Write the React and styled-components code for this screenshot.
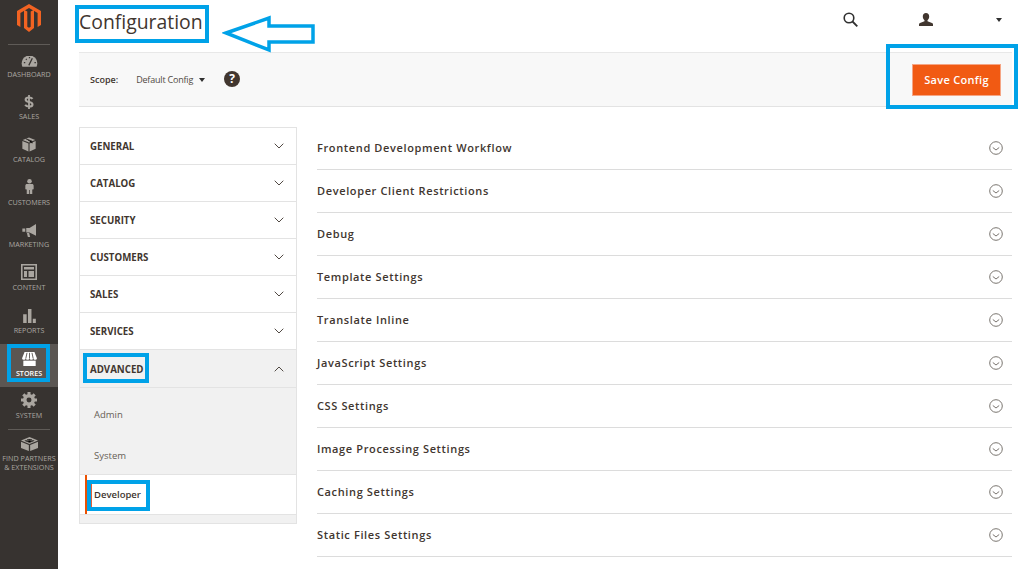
import React from 'react'
import styled, { createGlobalStyle } from 'styled-components'

const GlobalStyle = createGlobalStyle`
  html, body { margin: 0; padding: 0; background: #fff; overflow: hidden; }
  body { font-family: "Open Sans", "Liberation Sans", sans-serif; color: #303030; }
`

const LogoIcon = () => (
  <svg width="24" height="28" viewBox="0 0 24 28">
    <path fill="#f26322" d="M12 0 24 7v14l-3.4 2V9L12 4 3.4 9v14L0 21V7z" />
    <path fill="#f26322" d="M10.3 7.6v15.1L12 23.7l1.7-1V7.6l3.3-1.9v18.2L12 28l-5-4.100V5.700z" />
  </svg>
)

const icons = {
  dashboard: (
    <svg width="17" height="11" viewBox="0 2 24 15">
      <path fill="#aaa6a0" d="M12 1C5.500 1 1 6 1 12c0 2 .4 3.500 1 5h20c.6-1.500 1-3 1-5 0-6-4.500-11-11-11z" />
      <path stroke="#373330" strokeWidth="1.800" d="M11 15 16 5M4 11h2M7 6l1 1M12 3v2M19 11h2" />
    </svg>
  ),
  sales: (
    <svg width="10" height="14" viewBox="0 0 14 20">
      <path fill="none" stroke="#aaa6a0" strokeWidth="3" d="M12 5.500C11 4 9.500 3.500 7 3.500c-3 0-4.800 1.200-4.800 3.200 0 2 2 2.700 4.800 3.300 3 .6 5 1.300 5 3.400 0 2-2 3.100-5 3.100-2.500 0-4.200-.8-5.500-2.400" />
      <path stroke="#aaa6a0" strokeWidth="2.600" d="M7 0v20" />
    </svg>
  ),
  catalog: (
    <svg width="14" height="15" viewBox="0 0 20 20">
      <path fill="#aaa6a0" d="M10 0 19 3.500 10 7 1 3.500z" />
      <path fill="#aaa6a0" d="M.5 5 9.200 8.500V20L.5 16zM19.500 5 10.800 8.500V20l8.700-4z" />
      <path stroke="#373330" strokeWidth="1.400" d="M5.500 1.800 14.500 5.300v3" />
    </svg>
  ),
  customers: (
    <svg width="9" height="17" viewBox="0 0 13 22">
      <circle cx="6.500" cy="3.500" r="3.300" fill="#aaa6a0" />
      <path fill="#aaa6a0" d="M3 7.500h7c1.500 0 2.500 1 2.500 2.500v5l-2 .5V22H7v-6H6v6H2.500v-6.500L.5 15v-5C.5 8.500 1.500 7.500 3 7.500z" />
    </svg>
  ),
  marketing: (
    <svg width="15" height="13" viewBox="0 0 22 20">
      <path fill="#aaa6a0" d="M21 0v18L11 13H6V6h5z" />
      <path fill="#aaa6a0" d="M0 7h4.500v5H0zM7 14h3.500l1.500 6H8.500z" />
    </svg>
  ),
  content: (
    <svg width="16" height="16" viewBox="0 0 16 16">
      <path fill="none" stroke="#aaa6a0" strokeWidth="1.600" d="M.8.8h14.400v14.400H.8z" />
      <path fill="#aaa6a0" d="M3 3h10v2.500H3zM3 7h3v6H3zM7.500 7H13v6H7.500z" />
    </svg>
  ),
  reports: (
    <svg width="13" height="14" viewBox="0 0 14.500 16">
      <path fill="#aaa6a0" d="M0 6h4v10H0zM5.500 0h4v16h-4zM11 11h3.500v5H11z" />
    </svg>
  ),
  stores: (
    <svg width="17" height="14" viewBox="0 0 18 17">
      <path fill="#fff" d="M3 0h12l3 7.500c0 1.300-1 2-2.200 2-1 0-1.900-.6-2.200-1.500-.3.900-1.200 1.500-2.300 1.500S9.300 8.900 9 8c-.3.900-1.200 1.500-2.300 1.500S4.700 8.900 4.400 8c-.3.900-1.200 1.500-2.200 1.500C1 9.500 0 8.800 0 7.500z" />
      <path stroke="#5b5652" strokeWidth="1.100" d="M6 1 4.500 8M9 1v7M12 1l1.500 7" />
      <path fill="#fff" d="M1.500 10.500h15V17h-15z" />
    </svg>
  ),
  system: (
    <svg width="16" height="16" viewBox="0 0 18 18">
      <circle cx="9" cy="9" r="4.900" fill="none" stroke="#aaa6a0" strokeWidth="3.800" />
      <path stroke="#aaa6a0" strokeWidth="3.400" d="M9 0v18M0 9h18M2.600 2.600l12.800 12.800M15.400 2.600 2.600 15.400" />
      <circle cx="9" cy="9" r="2.800" fill="#373330" />
    </svg>
  ),
  partners: (
    <svg width="17" height="14" viewBox="0 0 18 18" preserveAspectRatio="none">
      <path fill="#aaa6a0" d="M9 0 18 4.500 9 9 0 4.500z" />
      <path fill="#aaa6a0" d="M0 6 8.300 10.200V18L0 14zM18 6 9.700 10.200V18L18 14z" />
      <path stroke="#373330" strokeWidth="1" d="M4 4.500 9 7l5-2.500M6.500 3 9 4.300 11.500 3" />
    </svg>
  ),
}

const Page = styled.div`
  width: 1024px;
  height: 569px;
  position: relative;
  display: flex;
  overflow: hidden;
  background: #fff;
`

const Sidebar = styled.nav`
  width: 58px;
  flex: none;
  background: #373330;
  display: flex;
  flex-direction: column;
  align-items: stretch;
  padding-top: 4px;
  box-sizing: border-box;
`

const LogoWrap = styled.div`
  height: 40px;
  display: flex;
  justify-content: center;
  align-items: flex-start;
`

const SideRule = styled.div`
  height: 1px;
  margin: 0 8px;
  background: #5f5b57;
  flex: none;
`

const SideItem = styled.a`
  height: ${p => p.$tall ? 42 : 42.700}px;
  flex: none;
  display: flex;
  flex-direction: column;
  align-items: center;
  justify-content: flex-end;
  padding-bottom: ${p => p.$tall ? 0 : 9}px;
  box-sizing: border-box;
  background: ${p => p.$active ? '#5b5652' : 'transparent'};
  color: ${p => p.$active ? '#fff' : '#aaa6a0'};
  font-size: 7.200px;
  line-height: 9px;
  text-align: center;
  text-transform: uppercase;
  font-weight: ${p => p.$active ? 600 : 400};
  white-space: nowrap;
`

const SideIcon = styled.span`
  height: 17px;
  display: flex;
  align-items: flex-end;
  justify-content: center;
  margin-bottom: 3px;
`

const Main = styled.main`
  flex: 1;
  min-width: 0;
  padding: 0 12px 0 21px;
`

const Header = styled.header`
  height: 52px;
  display: flex;
  align-items: flex-start;
`

const Title = styled.h1`
  margin: 5px 0 0 0;
  font-size: 19.400px;
  line-height: 34px;
  font-weight: 400;
  color: #41362f;
  flex: 1;
`

const HeaderTools = styled.div`
  display: flex;
  align-items: center;
  height: 39px;
  padding-right: 10px;
  color: #303030;
`

const ToolSlot = styled.span`
  display: flex;
  margin-left: ${p => p.$gap || 0}px;
`

const Caret = styled.span`
  display: inline-block;
  border-left: 3px solid transparent;
  border-right: 3px solid transparent;
  border-top: 4px solid #303030;
`

const ScopeBar = styled.div`
  height: 55px;
  background: #f8f8f8;
  border-top: 1px solid #e8e8e8;
  border-bottom: 1px solid #e3e3e3;
  box-sizing: border-box;
  display: flex;
  align-items: center;
  padding: 0 11px 0 11px;
`

const ScopeLabel = styled.span`
  font-size: 9px;
  font-weight: 600;
  color: #41362f;
  margin-right: 18px;
`

const ScopeValue = styled.span`
  font-size: 9px;
  color: #514943;
  margin-right: 6px;
  letter-spacing: -0.2px;
`

const HelpBadge = styled.span`
  width: 16px;
  height: 16px;
  margin-left: 19px;
  margin-top: -1px;
  border-radius: 50%;
  background: #41362f;
  color: #fff;
  font-size: 12px;
  font-weight: 700;
  line-height: 16px;
  text-align: center;
`

const SaveButton = styled.button`
  margin-left: auto;
  width: 89px;
  height: 32px;
  border: 1px solid #f5a584;
  background: #f15a13;
  color: #fff;
  font-family: inherit;
  font-size: 11px;
  font-weight: 600;
  letter-spacing: 0.3px;
  padding: 0;
`

const Columns = styled.div`
  display: flex;
  gap: 20px;
  margin-top: 20px;
`

const Tabs = styled.aside`
  width: 218px;
  flex: none;
`

const TabGroup = styled.div`
  border: 1px solid #e3e3e3;
  border-bottom: none;
  background: #fff;
`

const TabHead = styled.div`
  height: ${p => p.$open ? 38 : 37}px;
  box-sizing: border-box;
  border-bottom: 1px solid #e3e3e3;
  display: flex;
  align-items: center;
  justify-content: space-between;
  padding: ${p => p.$open ? '1px' : '0'} 12px 0 10px;
  font-size: 9.700px;
  font-weight: 700;
  color: #41362f;
  background: ${p => p.$open ? '#f1f1f1' : '#fff'};
`

const SubList = styled.div`
  background: #f1f1f1;
  height: 87px;
  padding-top: 6px;
  box-sizing: border-box;
  border-bottom: 1px solid #e3e3e3;
`

const SubLink = styled.div`
  height: 41px;
  line-height: 41px;
  padding-left: 14px;
  font-size: 9.500px;
  color: #676056;
`

const CurrentLink = styled.div`
  position: relative;
  height: 40px;
  line-height: 40px;
  padding-left: 14px;
  font-size: 9.500px;
  font-weight: 600;
  color: #41362f;
  background: #fff;
  border-bottom: 1px solid #e3e3e3;
  box-sizing: border-box;
  &::before {
    content: '';
    position: absolute;
    left: 5px;
    top: 0;
    bottom: 0;
    width: 2px;
    background: #eb5202;
  }
`

const TabFoot = styled.div`
  height: 8px;
  background: #f1f1f1;
  border-bottom: 1px solid #e3e3e3;
`

const Sections = styled.section`
  flex: 1;
  min-width: 0;
`

const SectionRow = styled.div`
  height: 43px;
  box-sizing: border-box;
  border-bottom: 1px solid #dcdcdc;
  display: flex;
  align-items: center;
  justify-content: space-between;
  padding: 0 9px 2px 0;
  font-size: 11px;
  font-weight: 600;
  letter-spacing: 0.63px;
  color: #41362f;
`

const RoundIcon = styled.svg`
  margin-top: 2px;
`

const Annotation = styled.div`
  position: absolute;
  left: ${p => p.$x}px;
  top: ${p => p.$y}px;
  width: ${p => p.$w}px;
  height: ${p => p.$h}px;
  box-sizing: border-box;
  border: 4px solid #00a2e8;
  box-shadow: ${p => p.$accent ? 'inset 1px 0 0 #e2603a' : 'none'};
  pointer-events: none;
`

const ArrowMark = styled.svg`
  position: absolute;
  left: 222px;
  top: 15px;
`

const Chevron = ({ up }) => (
  <svg width="10" height="6" viewBox="0 0 10 6">
    <path fill="none" stroke="#514943" strokeWidth="1" d={up ? 'M.7 5.300 5 1l4.300 4.300' : 'M.7.700 5 5 9.300.700'} />
  </svg>
)

const RoundChevron = () => (
  <RoundIcon width="14" height="14" viewBox="0 0 14 14">
    <circle cx="7" cy="7" r="6.300" fill="none" stroke="#7a7570" strokeWidth="1" />
    <path fill="none" stroke="#7a7570" strokeWidth="1" d="M3.800 6.500 7 9l3.200-2.500" />
  </RoundIcon>
)

const sideItems = [
  ['Dashboard', 'dashboard'],
  ['Sales', 'sales'],
  ['Catalog', 'catalog'],
  ['Customers', 'customers'],
  ['Marketing', 'marketing'],
  ['Content', 'content'],
  ['Reports', 'reports'],
  ['Stores', 'stores', true],
  ['System', 'system'],
]

const tabs = ['General', 'Catalog', 'Security', 'Customers', 'Sales', 'Services']

const sections = [
  'Frontend Development Workflow',
  'Developer Client Restrictions',
  'Debug',
  'Template Settings',
  'Translate Inline',
  'JavaScript Settings',
  'CSS Settings',
  'Image Processing Settings',
  'Caching Settings',
  'Static Files Settings',
]

export default function App() {
  return (
    <Page>
      <GlobalStyle />
      <Sidebar>
        <LogoWrap><LogoIcon /></LogoWrap>
        <SideRule />
        {sideItems.map(([label, icon, active]) => (
          <SideItem key={label} $active={active}>
            <SideIcon>{icons[icon]}</SideIcon>
            {label}
          </SideItem>
        ))}
        <SideRule />
        <SideItem $tall>
          <SideIcon>{icons.partners}</SideIcon>
          Find Partners<br />&amp; Extensions
        </SideItem>
      </Sidebar>
      <Main>
        <Header>
          <Title>Configuration</Title>
          <HeaderTools>
            <ToolSlot>
              <svg width="15" height="15" viewBox="0 0 15 15">
                <circle cx="6" cy="6" r="4.800" fill="none" stroke="#303030" strokeWidth="1.600" />
                <path stroke="#303030" strokeWidth="1.800" d="M9.500 9.500 14.300 14.300" />
              </svg>
            </ToolSlot>
            <ToolSlot $gap={61}>
              <svg width="14" height="13" viewBox="0 0 14 13">
                <path fill="#41362f" d="M7 0c2 0 3.200 1.500 3.200 3.500 0 1.800-.8 3-1.700 3.800v1L13 10c.6.300 1 .7 1 1.500V13H0v-1.500c0-.8.400-1.200 1-1.500l4.500-1.700v-1C4.600 6.500 3.800 5.300 3.800 3.500 3.800 1.500 5 0 7 0z" />
              </svg>
            </ToolSlot>
            <ToolSlot $gap={63}><Caret /></ToolSlot>
          </HeaderTools>
        </Header>
        <ScopeBar>
          <ScopeLabel>Scope:</ScopeLabel>
          <ScopeValue>Default Config</ScopeValue>
          <Caret />
          <HelpBadge>?</HelpBadge>
          <SaveButton>Save Config</SaveButton>
        </ScopeBar>
        <Columns>
          <Tabs>
            <TabGroup>
              {tabs.map(t => (
                <TabHead key={t}>{t.toUpperCase()}<Chevron /></TabHead>
              ))}
              <TabHead $open>ADVANCED<Chevron up /></TabHead>
              <SubList>
                <SubLink>Admin</SubLink>
                <SubLink>System</SubLink>
              </SubList>
              <CurrentLink>Developer</CurrentLink>
              <TabFoot />
            </TabGroup>
          </Tabs>
          <Sections>
            {sections.map(s => (
              <SectionRow key={s}>{s}<RoundChevron /></SectionRow>
            ))}
          </Sections>
        </Columns>
      </Main>

      <Annotation $x={75} $y={5} $w={134} $h={38} />
      <ArrowMark width="94" height="38" viewBox="0 0 94 38">
        <path fill="none" stroke="#00a2e8" strokeWidth="3.500" d="M4 18 47 3v8h44v16H47v8z" />
      </ArrowMark>
      <Annotation $x={886} $y={44} $w={132} $h={65} />
      <Annotation $x={7} $y={344} $w={43} $h={38} />
      <Annotation $x={83} $y={353} $w={66} $h={30} />
      <Annotation $x={87} $y={480} $w={63} $h={31} $accent />
    </Page>
  )
}
